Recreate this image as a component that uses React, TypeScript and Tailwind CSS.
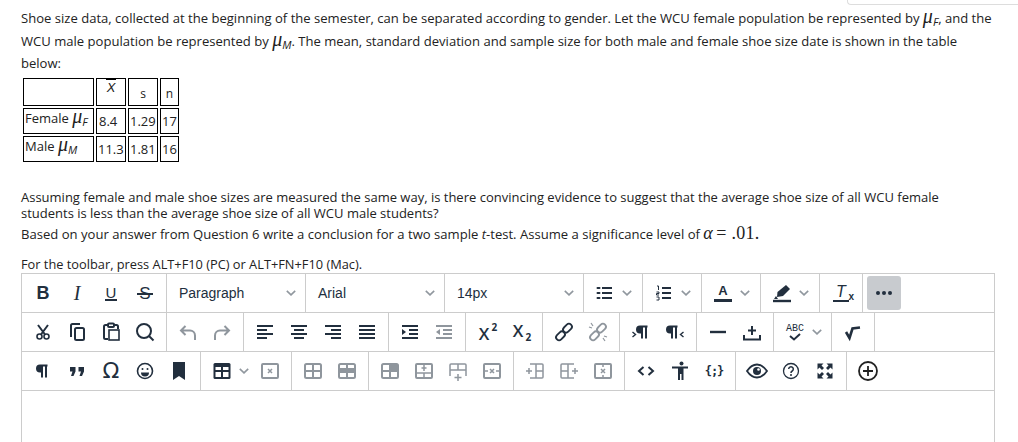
import type { ReactNode } from "react";

const ink = "#222f3e";

function Icon({ children, dim }: { children: ReactNode; dim?: boolean }) {
  return (
    <svg
      width="24"
      height="24"
      viewBox="0 0 24 24"
      fill="none"
      stroke={ink}
      strokeWidth="2"
      opacity={dim ? 0.5 : 1}
    >
      {children}
    </svg>
  );
}

function Btn({ children }: { children: ReactNode }) {
  return <div className="flex h-[34px] w-[34px] items-center justify-center text-[#222f3e]">{children}</div>;
}

function Chevron() {
  return (
    <svg width="10" height="6" viewBox="0 0 10 6" fill="none" stroke={ink} strokeOpacity="0.5" strokeWidth="1.6">
      <path d="M.8.8 5 4.8 9.2.8" />
    </svg>
  );
}

function Split({ children }: { children: ReactNode }) {
  return (
    <div className="flex h-[34px] w-[50px] items-center">
      <Btn>{children}</Btn>
      <Chevron />
    </div>
  );
}

function Group({ children, last }: { children: ReactNode; last?: boolean }) {
  return <div className={`flex items-center px-1 ${last ? "" : "border-r border-[#ccc]"}`}>{children}</div>;
}

function Select({ label }: { label: string }) {
  return (
    <div className="flex w-[139px] items-center justify-between border-r border-[#ccc] pl-3 pr-[9px] font-['Liberation_Sans',sans-serif] text-sm text-[#222f3e]">
      <span>{label}</span>
      <Chevron />
    </div>
  );
}

function Row({ children }: { children: ReactNode }) {
  return <div className="flex h-[39px] border-b border-[#ccc]">{children}</div>;
}

const TableIcon = ({ dim, fill }: { dim?: boolean; fill?: ReactNode }) => (
  <Icon dim={dim}>
    <rect x="4" y="5" width="16" height="14" rx="1.5" />
    <path d="M4 12h16M12 5v14" />
    {fill}
  </Icon>
);

const pilcrow = "M17.500 5.500H10a4 4 0 0 0 0 8h1v5h2v-11h2v11h2v-11h.5z";

function Mu({ sub }: { sub: string }) {
  return (
    <span className="inline-block leading-none">
      <span className="font-['Liberation_Serif',serif] text-[20px] italic leading-none">μ</span>
      <span className="relative top-[3px] font-['Open_Sans',sans-serif] text-[11px] italic leading-none">{sub}</span>
    </span>
  );
}

export default function App() {
  return (
    <div className="relative h-[442px] overflow-hidden bg-white font-['Open_Sans',sans-serif] text-[13px] text-[#222]">
      <div className="absolute right-0 top-0 h-[5px] w-[171px] rounded-bl border-b border-l border-[#ddd]" />
      <div className="pl-[21px] pt-[6px]">
        <p className="h-[66px] w-[985px] text-[13.07px] leading-[22px]">
          Shoe size data, collected at the beginning of the semester, can be separated according to gender. Let the WCU female population be represented by <Mu sub="F" />, and the WCU male population be represented by <Mu sub="M" />. The mean, standard deviation and sample size for both male and female shoe size date is shown in the table
          <br />
          below:
        </p>
        <table className="mt-[4px] border-separate border-spacing-[2px] text-[13px] leading-[16px]">
          <tbody>
            <tr className="h-[28px]">
              <td className="w-[71px] border border-black" />
              <td className="w-[30px] border border-black text-center align-top font-['Liberation_Sans',sans-serif] text-[13px] italic leading-[18px]">
                <span className="border-t border-black px-[1px]">X</span>
              </td>
              <td className="w-[30px] border border-black pt-[4px] text-center text-[12px]">s</td>
              <td className="w-[19px] border border-black pt-[4px] text-center text-[12px]">n</td>
            </tr>
            <tr className="h-[26px]">
              <td className="border border-black px-[1px] align-top whitespace-nowrap">
                <span className="relative -top-[3px]">Female <Mu sub="F" /></span>
              </td>
              <td className="border border-black px-[2px]">8.4</td>
              <td className="border border-black px-[1px]">1.29</td>
              <td className="border border-black px-[1px]">17</td>
            </tr>
            <tr className="h-[26px]">
              <td className="border border-black px-[1px] align-top whitespace-nowrap">
                <span className="relative -top-[3px]">Male <Mu sub="M" /></span>
              </td>
              <td className="border border-black px-[1px]">11.3</td>
              <td className="border border-black px-[1px]">1.81</td>
              <td className="border border-black px-[1px]">16</td>
            </tr>
          </tbody>
        </table>
        <p className="mt-[25px] w-[960px] leading-[16px]">
          Assuming female and male shoe sizes are measured the same way, is there convincing evidence to suggest that the average shoe size of all WCU female students is less than the average shoe size of all WCU male students?
        </p>
        <p className="mt-[3px] text-[13.08px] leading-[20px]">
          Based on your answer from Question 6 write a conclusion for a two sample <i>t</i>-test. Assume a significance level of <span className="font-['Liberation_Serif',serif] text-[18px] italic leading-none">α</span> <span className="font-['Liberation_Serif',serif] text-[18px] leading-none tracking-[0.3px]">= .01.</span>
        </p>
        <p className="mt-[12px] text-[12.8px] leading-[16px]">For the toolbar, press ALT+F10 (PC) or ALT+FN+F10 (Mac).</p>
      </div>

      <div className="ml-[21px] mt-[1px] w-[974px] border-x border-t border-[#ccc]">
        <Row>
          <Group>
            <Btn><span className="font-['Liberation_Sans',sans-serif] text-[18px] font-bold leading-none">B</span></Btn>
            <Btn><span className="font-['Liberation_Serif',serif] text-[20px] italic leading-none">I</span></Btn>
            <Btn><span className="border-b-2 border-[#222f3e] px-[1px] font-['Liberation_Sans',sans-serif] text-[15px] leading-[13px]">U</span></Btn>
            <Btn>
              <span className="relative font-['Liberation_Sans',sans-serif] text-[17px] leading-none">
                S
                <span className="absolute -left-[2px] -right-[2px] top-[8px] h-[2px] bg-[#222f3e]" />
              </span>
            </Btn>
          </Group>
          <Select label="Paragraph" />
          <Select label="Arial" />
          <Select label="14px" />
          <Group>
            <Split>
              <Icon>
                <path d="M9 7h10M9 12h10M9 17h10" />
                <path d="M4.500 7h2M4.500 12h2M4.500 17h2" strokeLinecap="round" />
              </Icon>
            </Split>
          </Group>
          <Group>
            <Split>
              <Icon>
                <path d="M10 7h9M10 12h9M10 17h9" />
                <path d="M5 5h1.500v4M4.500 11h2.500v1.500H4.500V14H7M4.500 16H7v3H4.500" strokeWidth="1" />
              </Icon>
            </Split>
          </Group>
          <Group>
            <Split>
              <div className="-mt-[2px] flex h-[20px] w-[18px] flex-col items-center border-b-[3px] border-[#222f3e] font-['Liberation_Sans',sans-serif] text-[13px] font-bold leading-[17px]">A</div>
            </Split>
          </Group>
          <Group>
            <Split>
              <Icon>
                <path d="M16 4 20 8 13 15 7 16 7.500 11Z" fill={ink} stroke="none" />
                <path d="M6 15 4 18h4" fill={ink} stroke="none" />
                <path d="M3 20h18" strokeWidth="2.400" />
              </Icon>
            </Split>
          </Group>
          <Group>
            <Btn>
              <span className="relative flex h-[18px] w-[16px] justify-center border-b-2 border-[#222f3e] font-['Liberation_Sans',sans-serif] text-[16px] italic leading-[15px]">
                T
                <span className="absolute -bottom-[2px] -right-[5px] text-[10px] font-bold not-italic leading-none">x</span>
              </span>
            </Btn>
          </Group>
          <div className="ml-1 flex items-center">
            <div className="flex h-[34px] w-[34px] items-center justify-center gap-[2px] rounded-[3px] bg-[#c8cbcf]">
              <span className="h-[4px] w-[4px] rounded-full bg-[#222f3e]" />
              <span className="h-[4px] w-[4px] rounded-full bg-[#222f3e]" />
              <span className="h-[4px] w-[4px] rounded-full bg-[#222f3e]" />
            </div>
          </div>
        </Row>
        <Row>
          <Group>
            <Btn>
              <Icon>
                <circle cx="8.500" cy="16.500" r="2.500" strokeWidth="1.600" />
                <circle cx="15.500" cy="16.500" r="2.500" strokeWidth="1.600" />
                <path d="M7 5l7 9.500M17 5l-7 9.500" />
              </Icon>
            </Btn>
            <Btn>
              <Icon>
                <path d="M6 17V5.500A1.500 1.500 0 0 1 7.500 4H15" />
                <rect x="10" y="8" width="9" height="12" rx="1.500" />
              </Icon>
            </Btn>
            <Btn>
              <Icon>
                <path d="M9 19H6.500A1.500 1.500 0 0 1 5 17.500v-11A1.500 1.500 0 0 1 6.500 5H9M15 5h2.500A1.500 1.500 0 0 1 19 6.500V9" />
                <rect x="9" y="3.500" width="6" height="3.500" rx="1" />
                <rect x="10" y="10" width="10" height="10" strokeWidth="1.600" />
              </Icon>
            </Btn>
            <Btn>
              <Icon>
                <circle cx="11" cy="11" r="7" />
                <path d="M16 16l4.500 4.500" />
              </Icon>
            </Btn>
          </Group>
          <Group>
            <Btn>
              <Icon dim>
                <path d="M9.500 6 5 10.500 9.500 15M5 10.500h9a5 5 0 0 1 5 5V20" />
              </Icon>
            </Btn>
            <Btn>
              <Icon dim>
                <path d="M14.500 6 19 10.500 14.500 15M19 10.500h-9a5 5 0 0 0-5 5V20" />
              </Icon>
            </Btn>
          </Group>
          <Group>
            <Btn><Icon><path d="M4 6h16M4 10h10M4 14h16M4 18h10" /></Icon></Btn>
            <Btn><Icon><path d="M4 6h16M7 10h10M4 14h16M7 18h10" /></Icon></Btn>
            <Btn><Icon><path d="M4 6h16M10 10h10M4 14h16M10 18h10" /></Icon></Btn>
            <Btn><Icon><path d="M4 6h16M4 10h16M4 14h16M4 18h16" /></Icon></Btn>
          </Group>
          <Group>
            <Btn>
              <Icon>
                <path d="M4 6h16M11 10h9M11 14h9M4 18h16" />
                <path d="M4 9l4 3-4 3z" fill={ink} stroke="none" />
              </Icon>
            </Btn>
            <Btn>
              <Icon dim>
                <path d="M4 6h16M11 10h9M11 14h9M4 18h16" />
                <path d="M8 9l-4 3 4 3z" fill={ink} stroke="none" />
              </Icon>
            </Btn>
          </Group>
          <Group>
            <Btn>
              <span className="relative -ml-[6px] mt-[2px] font-['Open_Sans',sans-serif] text-[17px] font-semibold leading-none">
                X
                <span className="absolute -right-[8px] -top-[3px] text-[10px] font-bold leading-none">2</span>
              </span>
            </Btn>
            <Btn>
              <span className="relative -ml-[6px] -mt-[4px] font-['Open_Sans',sans-serif] text-[17px] font-semibold leading-none">
                X
                <span className="absolute -bottom-[3px] -right-[8px] text-[10px] font-bold leading-none">2</span>
              </span>
            </Btn>
          </Group>
          <Group>
            <Btn>
              <Icon>
                <rect x="12.500" y="3.200" width="6" height="10" rx="3" transform="rotate(45 15.500 8.200)" strokeWidth="1.800" />
                <rect x="5.500" y="10.800" width="6" height="10" rx="3" transform="rotate(45 8.500 15.800)" strokeWidth="1.800" />
              </Icon>
            </Btn>
            <Btn>
              <Icon dim>
                <rect x="12.500" y="3.200" width="6" height="10" rx="3" transform="rotate(45 15.500 8.200)" strokeWidth="1.800" />
                <rect x="5.500" y="10.800" width="6" height="10" rx="3" transform="rotate(45 8.500 15.800)" strokeWidth="1.800" />
                <path d="M5 3l2 3M3 7l3 1M19 21l-2-3M21 17l-3-1" strokeWidth="1.200" />
              </Icon>
            </Btn>
          </Group>
          <Group>
            <Btn>
              <Icon>
                <path d={pilcrow} fill={ink} stroke="none" transform="translate(1 0)" />
                <path d="M3.500 12l3 2.500-3 2.500" strokeWidth="1.400" />
              </Icon>
            </Btn>
            <Btn>
              <Icon>
                <path d={pilcrow} fill={ink} stroke="none" transform="translate(-3 0)" />
                <path d="M20.500 12l-3 2.500 3 2.500" strokeWidth="1.400" />
              </Icon>
            </Btn>
          </Group>
          <Group>
            <Btn><Icon><path d="M4 12h16" strokeWidth="2.400" /></Icon></Btn>
            <Btn>
              <Icon>
                <path d="M4 15v4.500h16V15" />
                <path d="M12 6v9M8 10.500h8" />
              </Icon>
            </Btn>
          </Group>
          <Group>
            <div className="flex h-[34px] w-[49px] items-center">
              <Btn>
                <span className="flex flex-col items-center font-['Liberation_Mono',monospace] text-[10px] leading-[9px]">
                  ABC
                  <svg width="12" height="8" viewBox="0 0 12 8" fill="none" stroke={ink} strokeWidth="2"><path d="M1 3l4 3.500L11 1" /></svg>
                </span>
              </Btn>
              <Chevron />
            </div>
          </Group>
          <Group>
            <Btn>
              <Icon><path d="M5 12l3.500 6L11.500 8.500 19 7.500" strokeWidth="2.600" /></Icon>
            </Btn>
          </Group>
        </Row>
        <Row>
          <Group>
            <Btn><Icon><path d={pilcrow} fill={ink} stroke="none" transform="translate(-1 0)" /></Icon></Btn>
            <Btn>
              <Icon>
                <path d="M5 8h5.500v4.500L8.500 17H6l1.500-4.500H5zM13.500 8H19v4.500L17 17h-2.500l1.500-4.500h-2.500z" fill={ink} stroke="none" />
              </Icon>
            </Btn>
            <Btn><span className="font-['DejaVu_Sans',sans-serif] text-[22px] leading-none">Ω</span></Btn>
            <Btn>
              <Icon>
                <circle cx="12" cy="12" r="7.500" strokeWidth="1.600" />
                <circle cx="9.500" cy="10" r="1" fill={ink} stroke="none" />
                <circle cx="14.500" cy="10" r="1" fill={ink} stroke="none" />
                <path d="M8 13.500h8a4 4 0 0 1-8 0z" fill={ink} stroke="none" />
              </Icon>
            </Btn>
            <Btn><Icon><path d="M6 3h12v18l-6-4-6 4z" fill={ink} stroke="none" /></Icon></Btn>
          </Group>
          <Group>
            <div className="flex h-[34px] w-[48px] items-center">
              <Btn>
                <Icon>
                  <rect x="3.500" y="4" width="17" height="16" rx="1.500" fill={ink} stroke="none" />
                  <path d="M5.500 11h5.500V8H5.500zM13 11h5.500V8H13zM5.500 18h5.500v-5H5.500zM13 18h5.500v-5H13z" fill="#fff" stroke="none" />
                </Icon>
              </Btn>
              <Chevron />
            </div>
            <Btn>
              <Icon dim>
                <rect x="4" y="5" width="16" height="14" rx="1" />
                <path d="M10 10l4 4M14 10l-4 4" strokeWidth="1.500" />
              </Icon>
            </Btn>
          </Group>
          <Group>
            <Btn><TableIcon dim /></Btn>
            <Btn><TableIcon dim fill={<rect x="4" y="9" width="16" height="5" fill={ink} stroke="none" />} /></Btn>
          </Group>
          <Group>
            <Btn><TableIcon dim fill={<rect x="12" y="5" width="8" height="7" fill={ink} stroke="none" />} /></Btn>
            <Btn>
              <Icon dim>
                <rect x="4" y="5" width="16" height="14" rx="1" />
                <path d="M4 14h16M12 14v5M12 6v6M9.500 9h5" strokeWidth="1.500" />
              </Icon>
            </Btn>
            <Btn>
              <Icon dim>
                <path d="M4 17V6a1 1 0 0 1 1-1h14a1 1 0 0 1 1 1v11M4 11h16M12 5v6M12 15v7M8.500 18.500h7" strokeWidth="1.500" />
              </Icon>
            </Btn>
            <Btn>
              <Icon dim>
                <rect x="4" y="5" width="16" height="14" rx="1" />
                <path d="M10 10l4 4M14 10l-4 4M4 12h4M16 12h4" strokeWidth="1.500" />
              </Icon>
            </Btn>
          </Group>
          <Group>
            <Btn>
              <Icon dim>
                <path d="M7 5h12a1 1 0 0 1 1 1v12a1 1 0 0 1-1 1H7M13 5v14M13 12h7M6 9v6M3 12h6" strokeWidth="1.500" />
              </Icon>
            </Btn>
            <Btn>
              <Icon dim>
                <path d="M17 5H5a1 1 0 0 0-1 1v12a1 1 0 0 0 1 1h12M11 5v14M4 12h7M18 9v6M15 12h6" strokeWidth="1.500" />
              </Icon>
            </Btn>
            <Btn>
              <Icon dim>
                <rect x="4" y="5" width="16" height="14" rx="1" />
                <path d="M10 10l4 4M14 10l-4 4M12 5v3M12 16v3" strokeWidth="1.500" />
              </Icon>
            </Btn>
          </Group>
          <Group>
            <Btn><Icon><path d="M9.500 8 5 12l4.500 4M14.500 8l4.500 4-4.500 4" /></Icon></Btn>
            <Btn>
              <Icon>
                <circle cx="13.500" cy="4.500" r="2" fill={ink} stroke="none" />
                <path d="M4 7.500h16v2h-4.500V21h-2v-6h-1.500v6h-2V9.500H4z" fill={ink} stroke="none" />
              </Icon>
            </Btn>
            <Btn><span className="font-['DejaVu_Sans_Mono',monospace] text-[12px] font-bold leading-none tracking-[-1px]">{"{;}"}</span></Btn>
          </Group>
          <Group>
            <Btn>
              <Icon>
                <path d="M2 12c3-4.500 6.200-6.500 10-6.500S19 7.500 22 12c-3 4.500-6.200 6.500-10 6.500S5 16.500 2 12z" strokeWidth="1.800" />
                <circle cx="12" cy="12" r="4" fill={ink} stroke="none" />
                <circle cx="13.500" cy="10.500" r="1.300" fill="#fff" stroke="none" />
              </Icon>
            </Btn>
            <Btn>
              <Icon>
                <circle cx="12" cy="12" r="7.500" strokeWidth="1.300" />
                <path d="M9.700 10a2.300 2.300 0 1 1 3.500 2c-.9.500-1.200 1-1.200 2" strokeWidth="1.500" />
                <circle cx="12" cy="16" r="1" fill={ink} stroke="none" />
              </Icon>
            </Btn>
            <Btn>
              <Icon>
                <path d="M4.500 4.500h6l-2 2 2.500 2.500L9 11 6.500 8.500l-2 2zM19.500 4.500h-6l2 2L13 9l2 2 2.500-2.500 2 2zM4.500 19.500h6l-2-2 2.500-2.500-2-2-2.500 2.500-2-2zM19.500 19.500h-6l2-2-2.500-2.500 2-2 2.500 2.500 2-2z" fill={ink} stroke="none" />
              </Icon>
            </Btn>
          </Group>
          <Group last>
            <Btn>
              <svg width="24" height="24" viewBox="0 0 24 24" fill="none" stroke="#222" strokeWidth="1.800">
                <circle cx="12" cy="12" r="9" />
                <path d="M12 7v10M7 12h10" />
              </svg>
            </Btn>
          </Group>
        </Row>
        <div className="h-[60px]" />
      </div>
    </div>
  );
}
